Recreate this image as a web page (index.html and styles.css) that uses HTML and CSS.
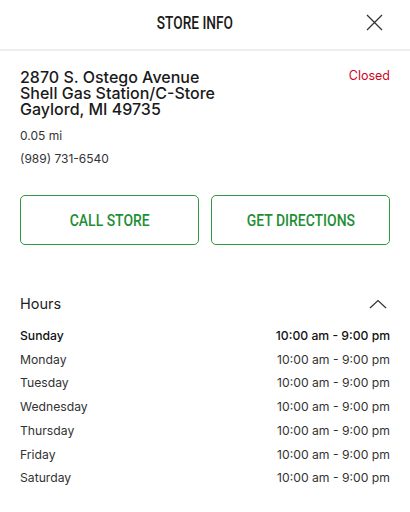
FILE: index.html
```html
<!DOCTYPE html>
<html>

<head>
    <meta charset="utf-8">
    <title>Store Info</title>
    <link rel="stylesheet" href="styles.css">
</head>

<body>
    <div class="header">
        <div class="title"><span class="condensed">STORE INFO</span></div>
        <button class="close-button" title="Close">
            <svg width="17" height="17" viewBox="0 0 17 17">
                <path d="M1 1 L16 16 M16 1 L1 16" stroke="#333" stroke-width="1.3" fill="none" />
            </svg>
        </button>
    </div>

    <div class="store">
        <div class="store-top">
            <div class="address">
                <div>2870 S. Ostego Avenue</div>
                <div>Shell Gas Station/C-Store</div>
                <div>Gaylord, MI 49735</div>
            </div>
            <div class="status">Closed</div>
        </div>
        <div class="detail distance">0.05 mi</div>
        <div class="detail phone">(989) 731-6540</div>

        <div class="actions">
            <button class="button"><span class="condensed">CALL STORE</span></button>
            <button class="button"><span class="condensed">GET DIRECTIONS</span></button>
        </div>
    </div>

    <div class="hours">
        <div class="hours-header">
            <div class="hours-title">Hours</div>
            <svg class="chevron" width="18" height="10" viewBox="0 0 18 10">
                <path d="M1 9 L9 1.5 L17 9" stroke="#333" stroke-width="1.2" fill="none" />
            </svg>
        </div>
        <div class="hours-list">
            <div class="hours-row today"><span>Sunday</span><span>10:00 am - 9:00 pm</span></div>
            <div class="hours-row"><span>Monday</span><span>10:00 am - 9:00 pm</span></div>
            <div class="hours-row"><span>Tuesday</span><span>10:00 am - 9:00 pm</span></div>
            <div class="hours-row"><span>Wednesday</span><span>10:00 am - 9:00 pm</span></div>
            <div class="hours-row"><span>Thursday</span><span>10:00 am - 9:00 pm</span></div>
            <div class="hours-row"><span>Friday</span><span>10:00 am - 9:00 pm</span></div>
            <div class="hours-row"><span>Saturday</span><span>10:00 am - 9:00 pm</span></div>
        </div>
    </div>
</body>

</html>
```

FILE: styles.css
```css
body {
    font-family: Inter, 'Noto Sans', sans-serif;
    margin: 0;
    background: white;
    color: #222;
}

.header {
    display: flex;
    align-items: center;
    height: 45px;
    padding: 0 0 4px 24px;
    border-bottom: 2px solid #eeeeee;
}

.title {
    flex: 1;
    text-align: center;
    font-family: Roboto, sans-serif;
    font-weight: 500;
    font-size: 19px;
    color: #1a1a1a;
}

.condensed {
    display: inline-block;
    transform: scaleX(0.72);
}

.close-button {
    margin-right: 27px;
    padding: 0;
    border: none;
    background: none;
    width: 17px;
    height: 17px;
    cursor: pointer;
}

.store {
    padding: 18px 20px 0;
}

.store-top {
    display: flex;
    justify-content: space-between;
    align-items: flex-start;
}

.address {
    font-size: 16px;
    font-weight: 500;
    line-height: 16px;
    color: #1a1a1a;
}

.status {
    font-size: 12.5px;
    color: #d0021b;
    margin-top: -1px;
}

.detail {
    font-size: 12px;
    color: #333;
    line-height: 16px;
}

.distance {
    margin-top: 11px;
}

.phone {
    margin-top: 7px;
}

.actions {
    display: grid;
    grid-template-columns: 1fr 1fr;
    gap: 12px;
    margin-top: 28px;
}

.button {
    height: 50px;
    background: white;
    border: 1px solid #2d9a3f;
    border-radius: 5px;
    color: #1f8f36;
    font-family: Roboto, sans-serif;
    font-weight: 500;
    font-size: 17px;
    cursor: pointer;
}

.button .condensed {
    transform: scaleX(0.82);
}

.hours {
    padding: 50px 20px 0;
}

.hours-header {
    display: flex;
    justify-content: space-between;
    align-items: center;
}

.hours-title {
    font-size: 14.5px;
    color: #222;
}

.chevron {
    margin-right: 3px;
}

.hours-list {
    margin-top: 12px;
}

.hours-row {
    display: flex;
    justify-content: space-between;
    font-size: 12.2px;
    line-height: 23.7px;
    color: #333;
}

.hours-row.today {
    font-weight: 500;
    color: #111;
}
```
